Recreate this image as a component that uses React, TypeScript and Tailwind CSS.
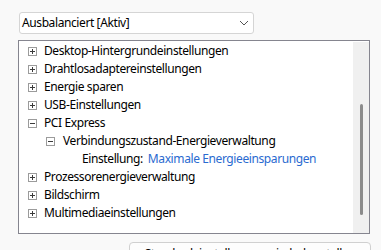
import React from "react";

type Row = { label: string; level: number; expanded?: boolean; value?: string };

const rows: Row[] = [
  { label: "Desktop-Hintergrundeinstellungen", level: 0 },
  { label: "Drahtlosadaptereinstellungen", level: 0 },
  { label: "Energie sparen", level: 0 },
  { label: "USB-Einstellungen", level: 0 },
  { label: "PCI Express", level: 0, expanded: true },
  { label: "Verbindungszustand-Energieverwaltung", level: 1, expanded: true },
  { label: "Einstellung:", level: 2, value: "Maximale Energieeinsparungen" },
  { label: "Prozessorenergieverwaltung", level: 0 },
  { label: "Bildschirm", level: 0 },
  { label: "Multimediaeinstellungen", level: 0 },
];

const Toggle = ({ expanded }: { expanded?: boolean }) => (
  <svg width="9" height="9" viewBox="0 0 9 9" className="shrink-0">
    <rect x="0.5" y="0.5" width="8" height="8" fill="#fff" stroke="#9b9b9b" />
    <path d="M2 4.5h5" stroke="#3b3b3b" strokeWidth="1" />
    {!expanded && <path d="M4.5 2v5" stroke="#3b3b3b" strokeWidth="1" />}
  </svg>
);

export default function App() {
  return (
    <div
      className="w-[381px] h-[250px] overflow-hidden bg-[#f9f9f9] pl-[19px] pt-[12px] text-[12px] tracking-[-0.4px] text-black"
      style={{ fontFamily: '"Segoe UI", "Noto Sans", sans-serif' }}
    >
      <div className="w-[235px] h-[22px] bg-white border border-[#d5d5d5] rounded-[3px] flex items-center justify-between pl-[2px] pr-[4px]">
        <span>Ausbalanciert [Aktiv]</span>
        <svg width="10" height="6" viewBox="0 0 10 6">
          <path d="M1 1l4 4 4-4" fill="none" stroke="#555" strokeWidth="1" />
        </svg>
      </div>

      <div className="mt-[6px] -ml-[1px] w-[352px] h-[194px] bg-white border border-[#85858f] flex">
        <div className="flex-1 flex flex-col pt-[1px]">
          {rows.map((r, i) => (
            <div key={i} className="h-[18px] flex items-center whitespace-nowrap">
              {r.level === 0 && (
                <div className="flex items-center pl-[9px]">
                  <Toggle expanded={r.expanded} />
                  <span className="ml-[7px]">{r.label}</span>
                </div>
              )}
              {r.level === 1 && (
                <div className="flex items-center pl-[27px]">
                  <Toggle expanded={r.expanded} />
                  <span className="ml-[8px]">{r.label}</span>
                </div>
              )}
              {r.level === 2 && (
                <div className="flex items-center pl-[63px]">
                  <span>{r.label}</span>
                  <span className="ml-[5px] text-[#2a6ad0]">{r.value}</span>
                </div>
              )}
            </div>
          ))}
        </div>
        <div className="w-[16px] mt-[1px] bg-[#f0f0f0] flex justify-center">
          <div className="w-[3px] mt-[62px] h-[111px] bg-[#8b8b8b] rounded-full" />
        </div>
      </div>

      <div className="mt-[8px] ml-[110px] w-[242px] h-[24px] bg-[#fdfdfd] border border-[#d0d0d0] rounded-[4px] flex justify-center pt-[2px]">
        Standardeinstellungen wiederherstellen
      </div>
    </div>
  );
}
